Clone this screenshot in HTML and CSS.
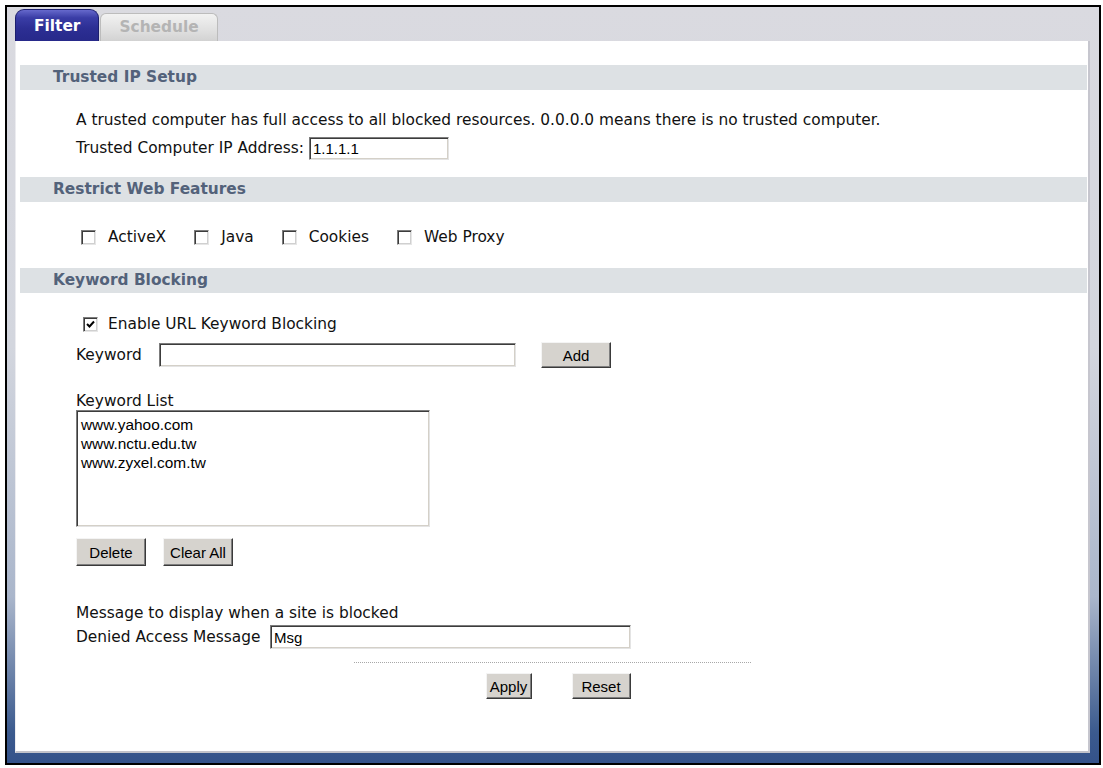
FILE: index.html
```html
<!DOCTYPE html>
<html lang="en">

<head>
    <meta charset="UTF-8">
    <title>Content Filter</title>
    <link rel="stylesheet" href="styles.css">
</head>

<body>
    <div class="frame">
        <div class="tabs">
            <div class="tab active">Filter</div>
            <div class="tab">Schedule</div>
        </div>

        <div class="panel">
            <div class="section-title">Trusted IP Setup</div>
            <div class="section-body trusted">
                <div class="line">A trusted computer has full access to all blocked resources. 0.0.0.0 means there is no trusted computer.</div>
                <div class="line">
                    <span class="ip-label">Trusted Computer IP Address:</span>
                    <input class="field ip" type="text" value="1.1.1.1">
                </div>
            </div>

            <div class="section-title">Restrict Web Features</div>
            <div class="section-body features">
                <div class="line checks">
                    <span class="check"><span class="cb"></span>ActiveX</span>
                    <span class="check"><span class="cb"></span>Java</span>
                    <span class="check"><span class="cb"></span>Cookies</span>
                    <span class="check"><span class="cb"></span>Web Proxy</span>
                </div>
            </div>

            <div class="section-title">Keyword Blocking</div>
            <div class="section-body keywords">
                <div class="line enable">
                    <span class="cb checked">
                        <svg width="9" height="9" viewBox="0 0 9 9"><path d="M1 4 L3.5 6.5 L8 1.5" fill="none" stroke="#000" stroke-width="2"/></svg>
                    </span>
                    Enable URL Keyword Blocking
                </div>
                <div class="line keyword-row">
                    <span class="label kw-label">Keyword</span>
                    <input class="field keyword" type="text" value="">
                    <button class="btn add">Add</button>
                </div>

                <div class="list-label">Keyword List</div>
                <div class="listbox">
                    <div>www.yahoo.com</div>
                    <div>www.nctu.edu.tw</div>
                    <div>www.zyxel.com.tw</div>
                </div>
                <div class="list-buttons">
                    <button class="btn delete">Delete</button>
                    <button class="btn clear">Clear All</button>
                </div>

                <div class="msg-label">Message to display when a site is blocked</div>
                <div class="msg-row">
                    <span class="label denied-label">Denied Access Message</span>
                    <input class="field denied" type="text" value="Msg">
                </div>
            </div>

            <div class="divider"></div>
            <div class="actions">
                <button class="btn apply">Apply</button>
                <button class="btn reset">Reset</button>
            </div>
        </div>
    </div>
</body>

</html>
```

FILE: styles.css
```css
body {
    margin: 0;
    padding: 5px;
    background: #fff;
    font-family: "DejaVu Sans", Verdana, sans-serif;
    font-size: 15.4px;
    color: #111;
}

.frame {
    width: 1096px;
    height: 760px;
    box-sizing: border-box;
    border: 2px solid #000;
    padding: 0 9px 10px 8px;
    display: flex;
    flex-direction: column;
    background: linear-gradient(to bottom, #dadae0 0%, #d3d6de 45%, #aab6cb 78%, #3b5a8e 96%, #34528a 100%);
}

/* tabs */
.tabs {
    height: 34px;
    display: flex;
    align-items: flex-end;
    gap: 1px;
}

.tab {
    box-sizing: border-box;
    height: 28px;
    padding: 0 18px;
    line-height: 27px;
    font-weight: bold;
    color: #b4b4b4;
    border: 1px solid #bcbcbc;
    border-bottom: none;
    border-radius: 6px 6px 0 0;
    background: linear-gradient(to bottom, #f2f2f2 0%, #e0e0e0 60%, #d2d2d2 100%);
}

.tab.active {
    height: 32px;
    line-height: 33px;
    color: #fff;
    border-color: #1d1f6e;
    border-radius: 9px 9px 0 0;
    background: linear-gradient(to bottom, #6669cc 0%, #3a3da6 25%, #2c2e93 60%, #27298a 100%);
}

/* main panel */
.panel {
    flex: 1;
    box-sizing: border-box;
    background: #fff;
    padding-top: 24px;
    border-right: 2px solid #c6c6ce;
    border-bottom: 2px solid #c2c2ca;
    border-left: 1px solid #ececf0;
}

.section-title {
    height: 25px;
    line-height: 25px;
    margin: 0 1px 0 4px;
    padding-left: 33px;
    background: #dde1e4;
    color: #53627a;
    font-weight: bold;
}

.section-body {
    padding-left: 60px;
}

.line {
    height: 28px;
    line-height: 28px;
    display: flex;
    align-items: center;
    white-space: nowrap;
}

.trusted {
    padding-top: 16px;
    padding-bottom: 15px;
}

.ip-label {
    margin-right: 5px;
}

.features {
    padding-top: 21px;
    padding-bottom: 17px;
}

.check {
    display: flex;
    align-items: center;
    margin-right: 28px;
}

.checks {
    padding-left: 5px;
}

/* sunken check box */
.cb {
    box-sizing: border-box;
    width: 15px;
    height: 15px;
    margin-right: 12px;
    background: #fff;
    border: 1px solid;
    border-color: #7c7c7c #e6e6e6 #e6e6e6 #7c7c7c;
    box-shadow: inset 1px 1px #3c3c3c, inset -1px -1px #d0d0d0;
    display: flex;
    align-items: center;
    justify-content: center;
}

.keywords {
    padding-top: 17px;
}

.enable {
    padding-left: 7px;
}

.enable .cb {
    margin-right: 10px;
}

.keyword-row {
    margin-top: 3px;
}

.label {
    display: inline-block;
}

.kw-label {
    width: 83px;
}

.denied-label {
    width: 194px;
}

/* sunken text inputs */
.field {
    box-sizing: border-box;
    height: 24px;
    margin: 0;
    padding: 0 3px;
    font-family: "Liberation Sans", Arial, sans-serif;
    font-size: 15px;
    color: #000;
    background: #fff;
    border: 1px solid;
    border-color: #7c7c7c #e4e4e4 #e4e4e4 #7c7c7c;
    box-shadow: inset 1px 1px #3c3c3c, inset -1px -1px #d4d0c8;
    outline: none;
}

.ip {
    width: 140px;
    height: 23px;
}

.keyword {
    width: 357px;
}

.denied {
    width: 361px;
}

/* raised buttons */
.btn {
    box-sizing: border-box;
    height: 26px;
    margin: 0;
    padding: 0;
    font-family: "Liberation Sans", Arial, sans-serif;
    font-size: 15px;
    color: #000;
    background: #d6d3ce;
    border: 1px solid;
    border-color: #f4f4f4 #3a3a3a #3a3a3a #f4f4f4;
    box-shadow: inset -1px -1px #7e7e7e;
}

.add {
    width: 70px;
    margin-left: 25px;
}

.list-label {
    margin-top: 23px;
    height: 18px;
    line-height: 18px;
}

.listbox {
    box-sizing: border-box;
    width: 354px;
    height: 117px;
    padding: 4px 4px;
    font-family: "Liberation Sans", Arial, sans-serif;
    font-size: 15.4px;
    line-height: 19px;
    color: #000;
    background: #fff;
    border: 1px solid;
    border-color: #7c7c7c #e4e4e4 #e4e4e4 #7c7c7c;
    box-shadow: inset 1px 1px #3c3c3c, inset -1px -1px #d4d0c8;
}

.list-buttons {
    margin-top: 11px;
    display: flex;
    gap: 17px;
}

.list-buttons .btn {
    height: 28px;
    width: 70px;
}

.msg-label {
    margin-top: 35px;
    height: 24px;
    line-height: 24px;
}

.msg-row {
    height: 24px;
    line-height: 24px;
    display: flex;
    align-items: center;
}

.divider {
    width: 397px;
    margin: 13px auto 0;
    border-top: 1px dotted #a8a8a8;
}

.actions {
    margin-top: 10px;
    display: flex;
    justify-content: center;
    gap: 40px;
    padding-left: 12px;
}

.apply {
    width: 46px;
}

.reset {
    width: 59px;
}
```
